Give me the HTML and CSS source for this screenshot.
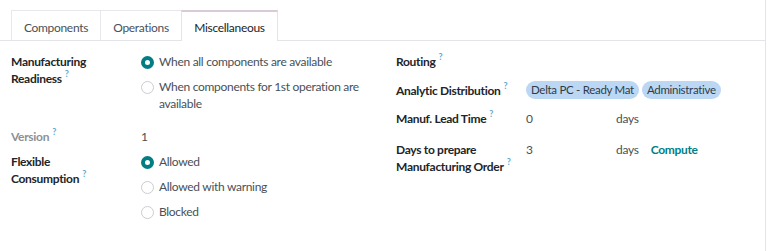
FILE: index.html
```html
<!DOCTYPE html>
<html>
<head>
<meta charset="utf-8">
<link rel="stylesheet" href="styles.css">
</head>
<body>
<div class="sheet">
  <ul class="tabs">
    <li class="tab">Components</li>
    <li class="tab">Operations</li>
    <li class="tab active">Miscellaneous</li>
  </ul>
  <div class="pane">
    <div class="group">
      <div class="row">
        <div class="label">Manufacturing Readiness<sup class="help">?</sup></div>
        <div class="value">
          <div class="radio"><span class="dot on"></span><span>When all components are available</span></div>
          <div class="radio"><span class="dot"></span><span>When components for 1st operation are available</span></div>
        </div>
      </div>
      <div class="row">
        <div class="label muted">Version<sup class="help">?</sup></div>
        <div class="value plain">1</div>
      </div>
      <div class="row">
        <div class="label narrow">Flexible Consumption<sup class="help">?</sup></div>
        <div class="value">
          <div class="radio"><span class="dot on"></span><span>Allowed</span></div>
          <div class="radio"><span class="dot"></span><span>Allowed with warning</span></div>
          <div class="radio"><span class="dot"></span><span>Blocked</span></div>
        </div>
      </div>
    </div>
    <div class="group right">
      <div class="row r-routing">
        <div class="label">Routing<sup class="help">?</sup></div>
        <div class="value"></div>
      </div>
      <div class="row r-analytic">
        <div class="label">Analytic Distribution<sup class="help">?</sup></div>
        <div class="value tags">
          <span class="tag">Delta PC - Ready Mat</span>
          <span class="tag">Administrative</span>
        </div>
      </div>
      <div class="row r-lead">
        <div class="label">Manuf. Lead Time<sup class="help">?</sup></div>
        <div class="value days"><span class="num">0</span><span>days</span></div>
      </div>
      <div class="row">
        <div class="label">Days to prepare Manufacturing Order<sup class="help">?</sup></div>
        <div class="value days"><span class="num">3</span><span>days</span><span class="compute">Compute</span></div>
      </div>
    </div>
  </div>
</div>
</body>
</html>
```
FILE: styles.css
```css
html, body {
  margin: 0;
  padding: 0;
  background: #ffffff;
}
body {
  font-family: Lato, "Noto Sans", sans-serif;
  font-size: 12px;
  letter-spacing: -0.3px;
  line-height: 17px;
  color: #212529;
}
.sheet {
  width: 766px;
  height: 251px;
  border-right: 1px solid #e2e4e7;
  box-sizing: border-box;
}
.tabs {
  list-style: none;
  margin: 0;
  padding: 10px 0 0 11px;
  display: flex;
  border-bottom: 1px solid #e2e4e7;
}
.tab {
  width: 90px;
  text-align: center;
  height: 30px;
  box-sizing: border-box;
  padding-top: 8px;
  border: 1px solid #e6e8eb;
  border-bottom: none;
  margin-bottom: -1px;
  margin-right: -1px;
  color: #4a5158;
  background: #fff;
}
.tab:nth-child(2) {
  width: 82px;
}
.tab.active {
  width: 97px;
  height: 31px;
  border-top: 2px solid #d8cbd6;
  color: #212529;
  padding-top: 7px;
  border-color: #e2e4e7;
  border-top-color: #d8cbd6;
}
.pane {
  display: flex;
  padding: 12px 0 0 11px;
}
.group {
  flex: none;
  width: 385px;
}
.group.right {
  flex: 1;
  min-width: 0;
}
.row {
  display: flex;
  margin-bottom: 8px;
}
.label {
  width: 130px;
  flex: none;
  font-weight: 700;
  padding-right: 10px;
  box-sizing: border-box;
}
.label.narrow {
  padding-right: 24px;
}
.label.muted {
  color: #8c9196;
}
.help {
  color: #5fa9cf;
  font-size: 9px;
  font-weight: 700;
  line-height: 0;
  vertical-align: 6px;
  margin-left: 3px;
}
.value {
  flex: 1;
  color: #495057;
}
.radio {
  display: flex;
  align-items: flex-start;
  margin-bottom: 8px;
}
.dot {
  flex: none;
  width: 11px;
  height: 11px;
  border-radius: 50%;
  border: 1px solid #c9cdd1;
  margin: 3px 5px 0 0;
  background: #fff;
}
.dot.on {
  width: 5px;
  height: 5px;
  border: 4px solid #017e84;
}
.r-routing {
  min-height: 17px;
}
.r-analytic {
  min-height: 24px;
  align-items: center;
}
.r-lead {
  min-height: 22.5px;
}
.tags {
  display: flex;
  gap: 3px;
}
.tag {
  background: #bcd7f3;
  color: #2f3b48;
  border-radius: 9px;
  padding: 1px 5px;
  font-size: 11.5px;
  line-height: 16px;
}
.days {
  display: flex;
}
.num {
  width: 90px;
}
.compute {
  color: #017e84;
  font-weight: 700;
  margin-left: 12px;
}
```
